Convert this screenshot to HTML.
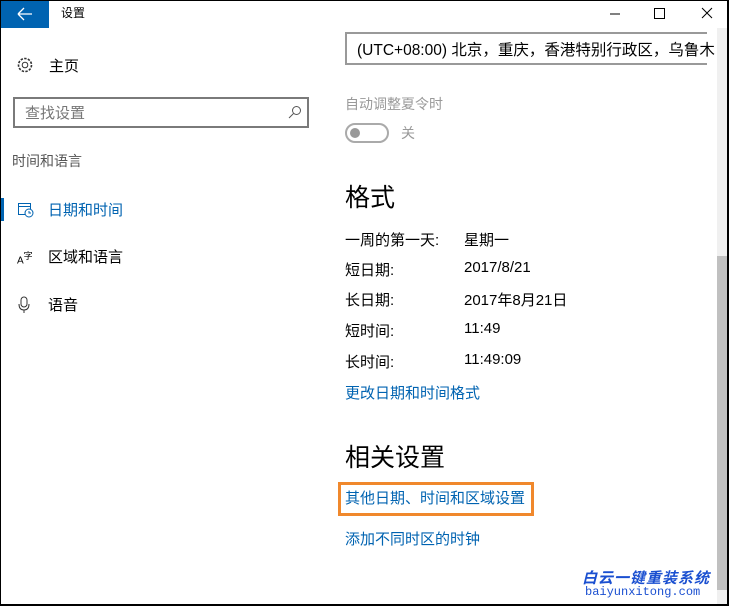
<!DOCTYPE html><html><head><meta charset="utf-8"><style>
*{margin:0;padding:0;box-sizing:border-box}
body{width:729px;height:606px;overflow:hidden;background:#fff;font-family:"Liberation Sans","Noto Sans CJK SC",sans-serif;position:relative;color:#000}
.a{position:absolute;white-space:nowrap}
.frame{position:absolute;left:0;top:0;width:729px;height:606px;border:1px solid #000;border-right:2px solid #000;border-bottom:2px solid #000;pointer-events:none}
.k{font-size:15px;color:#000}
.lnk{color:#0063b1;font-size:15px}
</style></head><body>
<div class="a" style="left:0;top:0;width:49px;height:28px;background:#0063b1"></div>
<svg class="a" style="left:17px;top:7px" width="16" height="14"><path d="M1 7H15M1 7L7 1M1 7L7 13" stroke="#fff" stroke-width="1.3" fill="none"/></svg>
<div class="a" style="left:61px;top:4px;font-size:12px">设置</div>
<svg class="a" style="left:610px;top:6px" width="110" height="16"><path d="M0 8H10" stroke="#000"/><rect x="44.5" y="2.5" width="10" height="10" stroke="#000" fill="none"/><path d="M92 2L102 12M102 2L92 12" stroke="#000"/></svg>
<svg class="a" style="left:16px;top:56px" width="18" height="18" viewBox="0 0 18 18"><circle cx="9" cy="9" r="2.8" fill="none" stroke="#333"/><circle cx="9" cy="9" r="6.5" fill="none" stroke="#333" stroke-width="1.6" stroke-dasharray="2.4 1.3"/></svg>
<div class="a" style="left:49px;top:55px;font-size:15px">主页</div>
<div class="a" style="left:13px;top:97px;width:296px;height:31px;border:2px solid #7a7a7a"></div>
<div class="a" style="left:25px;top:102px;font-size:15px;color:#777">查找设置</div>
<svg class="a" style="left:288px;top:105px" width="14" height="14"><circle cx="8.5" cy="5.5" r="4" fill="none" stroke="#555"/><path d="M5.5 8.5L1 13" stroke="#555"/></svg>
<div class="a" style="left:12px;top:151px;font-size:14px;color:#555">时间和语言</div>
<div class="a" style="left:0;top:198px;width:4px;height:23px;background:#0063b1"></div>
<svg class="a" style="left:17px;top:201px" width="17" height="17"><rect x="1.5" y="2.5" width="12" height="11" fill="none" stroke="#0063b1"/><path d="M1.5 5.5H13.5" stroke="#0063b1"/><circle cx="12" cy="12" r="4" fill="#fff" stroke="#0063b1"/><path d="M12 10V12H14" stroke="#0063b1" fill="none"/></svg>
<div class="a" style="left:48px;top:199px;font-size:15px;color:#0063b1">日期和时间</div>
<div class="a" style="left:17px;top:249px;font-size:10px">A<sup style="font-size:9px">字</sup></div>
<div class="a" style="left:48px;top:246px;font-size:15px">区域和语言</div>
<svg class="a" style="left:18px;top:296px" width="12" height="18"><rect x="3" y="1" width="6" height="10" rx="3" fill="none" stroke="#333"/><path d="M1 8Q1 14 6 14Q11 14 11 8M6 14V17" stroke="#333" fill="none"/></svg>
<div class="a" style="left:48px;top:294px;font-size:15px">语音</div>

<div class="a" style="left:345px;top:32px;width:362px;height:33px;border:2px solid #999;border-right:none"></div>
<div class="a" style="left:357px;top:38px;font-size:15.5px">(UTC+08:00) 北京，重庆，香港特别行政区，乌鲁木</div>
<div class="a" style="left:345px;top:94px;font-size:14px;color:#999">自动调整夏令时</div>
<div class="a" style="left:345px;top:123px;width:44px;height:20px;border:2px solid #aaa;border-radius:10px"></div>
<div class="a" style="left:350px;top:128px;width:10px;height:10px;border-radius:50%;background:#999"></div>
<div class="a" style="left:401px;top:123px;font-size:14px;color:#999">关</div>
<div class="a" style="left:345px;top:178px;font-size:25px">格式</div>
<div class="a k" style="left:345px;top:229px">一周的第一天:</div><div class="a k" style="left:464px;top:229px">星期一</div>
<div class="a k" style="left:345px;top:259px">短日期:</div><div class="a k" style="left:464px;top:259px">2017/8/21</div>
<div class="a k" style="left:345px;top:289px">长日期:</div><div class="a k" style="left:464px;top:289px">2017年8月21日</div>
<div class="a k" style="left:345px;top:320px">短时间:</div><div class="a k" style="left:464px;top:320px">11:49</div>
<div class="a k" style="left:345px;top:351px">长时间:</div><div class="a k" style="left:464px;top:351px">11:49:09</div>
<div class="a lnk" style="left:345px;top:382px">更改日期和时间格式</div>
<div class="a" style="left:345px;top:438px;font-size:25px">相关设置</div>
<div class="a" style="left:338px;top:482px;width:196px;height:34px;border:3px solid #f0882c"></div>
<div class="a lnk" style="left:345px;top:487px">其他日期、时间和区域设置</div>
<div class="a lnk" style="left:345px;top:528px">添加不同时区的时钟</div>

<div class="a" style="left:717px;top:28px;width:10px;height:576px;background:#f0f0f0"></div>
<div class="a" style="left:717px;top:256px;width:10px;height:334px;background:#c0c0c0"></div>
<div class="a" style="left:582px;top:567px;font-size:15px;font-weight:bold;font-style:italic;color:#1a4fd0;letter-spacing:1px">白云一键重装系统</div>
<div class="a" style="left:585px;top:585px;font-family:'Liberation Mono',monospace;font-size:12px;color:#1a4fd0">baiyunxitong.com</div>
<div class="frame"></div>
</body></html>
